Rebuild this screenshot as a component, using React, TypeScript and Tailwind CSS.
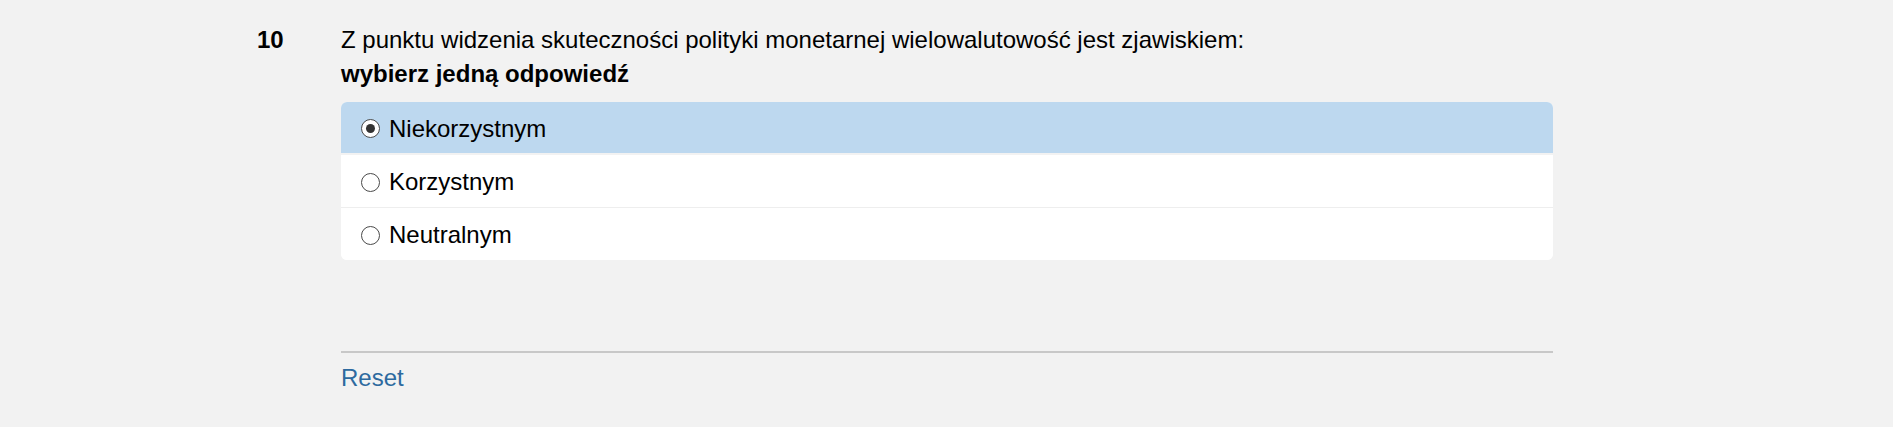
import React, { useState } from "react";

const options = ["Niekorzystnym", "Korzystnym", "Neutralnym"];

const Radio: React.FC<{ checked: boolean }> = ({ checked }) => (
  <span className="flex h-[19px] w-[19px] shrink-0 items-center justify-center rounded-full border-[1.5px] border-[#4a4a4a] bg-white">
    {checked && <span className="h-[9px] w-[9px] rounded-full bg-[#333]" />}
  </span>
);

export default function App() {
  const [selected, setSelected] = useState(0);

  return (
    <div
      className="min-h-[427px] bg-[#f2f2f2] text-[24px] leading-[1.42857] text-black"
      style={{ fontFamily: '"Liberation Sans", Arial, sans-serif' }}
    >
      <div className="flex pl-[257px] pt-[23px]">
        {/* Question number */}
        <div className="w-[84px] shrink-0 font-bold">10</div>

        {/* Question body */}
        <div className="w-[1212px]">
          <p>Z punktu widzenia skuteczności polityki monetarnej wielowalutowość jest zjawiskiem:</p>
          <p className="font-bold">wybierz jedną odpowiedź</p>

          <div className="mt-[10px] overflow-hidden rounded-[6px] bg-white">
            {options.map((opt, i) => (
              <label
                key={opt}
                onClick={() => setSelected(i)}
                className={
                  "flex cursor-pointer items-center gap-[9px] pl-[20px] pt-[10px] pb-[7.5px] " +
                  (i === 0 ? "border-b-2 border-[#f2f2f2] " : i === 1 ? "border-b border-[#eeeeee] " : "") +
                  (selected === i ? "bg-[#bdd8ef]" : "bg-white")
                }
              >
                <Radio checked={selected === i} />
                <span>{opt}</span>
              </label>
            ))}
          </div>

          <div className="mt-[91px] border-t-2 border-[#c8c8c8] pt-[8px]">
            <button
              onClick={() => setSelected(-1)}
              className="text-[#2d6a9f] hover:underline"
            >
              Reset
            </button>
          </div>
        </div>
      </div>
    </div>
  );
}
